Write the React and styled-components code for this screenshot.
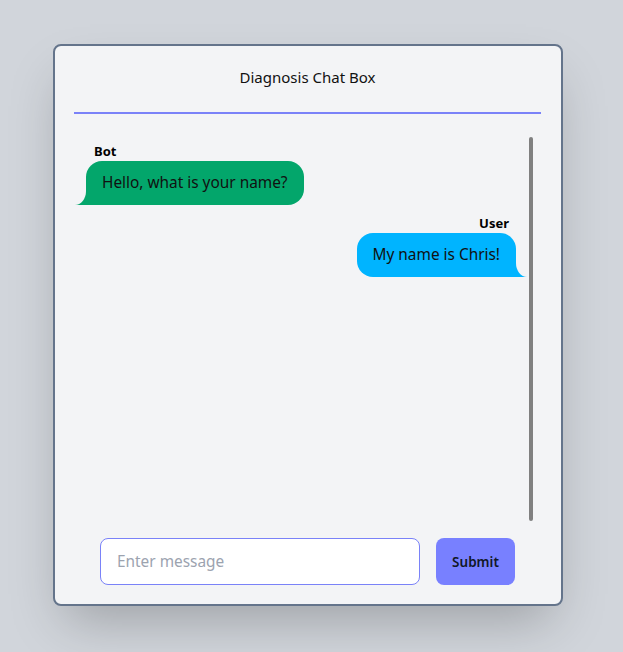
import React, { useState } from "react";
import styled, { createGlobalStyle } from "styled-components";

const GlobalStyle = createGlobalStyle`
  html, body {
    margin: 0;
    padding: 0;
    background: #d1d5db;
    font-family: "Noto Sans", "Open Sans", sans-serif;
  }
`;

const Page = styled.div`
  padding: 44px 0 0 53px;
  height: 652px;
  box-sizing: border-box;
`;

const Card = styled.div`
  width: 510px;
  height: 562px;
  box-sizing: border-box;
  border: 2px solid #64748b;
  border-radius: 8px;
  background: #f3f4f6;
  box-shadow: 0 25px 50px -12px rgba(0, 0, 0, 0.25);
  padding: 0 20px 0 19px;
  display: flex;
  flex-direction: column;
`;

const Header = styled.div`
  padding: 20px 0 24px;
  line-height: 22px;
  text-align: center;
  font-size: 15px;
  color: #111;
  border-bottom: 2px solid #7a82f8;
`;

const ChatBody = styled.div`
  flex: 1;
  display: flex;
  min-height: 0;
`;

const Messages = styled.div`
  flex: 1;
  padding: 29px 2px 0 1px;
  display: flex;
  flex-direction: column;
  gap: 10px;
`;

const Scrollbar = styled.div`
  width: 4px;
  margin: 23px 8px 5px 0;
  border-radius: 2px;
  background: #808080;
`;

const Row = styled.div`
  display: flex;
  flex-direction: column;
  align-items: ${(p) => (p.$mine ? "flex-end" : "flex-start")};
`;

const Sender = styled.div`
  font-size: 13px;
  font-weight: 700;
  line-height: 16px;
  color: #000;
  margin: ${(p) => (p.$mine ? "0 18px 2px 0" : "0 0 2px 19px")};
`;

const Bubble = styled.div`
  position: relative;
  background: ${(p) => p.$bg};
  color: #111;
  font-size: 15.4px;
  line-height: 24px;
  padding: 10px 16px;
  border-radius: 16px;
  ${(p) =>
    p.$mine
      ? "margin-right: 11px; border-bottom-right-radius: 0;"
      : "margin-left: 11px; border-bottom-left-radius: 0;"}

  &::before,
  &::after {
    content: "";
    position: absolute;
    bottom: 0;
    width: 11px;
    height: 16px;
    ${(p) => (p.$mine ? "right: -11px;" : "left: -11px;")}
  }
  &::before {
    background: ${(p) => p.$bg};
  }
  &::after {
    background: #f3f4f6;
    ${(p) =>
      p.$mine
        ? "border-bottom-left-radius: 11px 14px;"
        : "border-bottom-right-radius: 11px 14px;"}
  }
`;

const Footer = styled.form`
  display: flex;
  gap: 16px;
  padding: 12px 0 19px 26px;
`;

const Input = styled.input`
  width: 320px;
  height: 47px;
  box-sizing: border-box;
  border: 1px solid #7a82f8;
  border-radius: 8px;
  background: #fff;
  padding: 0 16px;
  font-family: inherit;
  font-size: 15.4px;
  color: #111;
  outline: none;
  &::placeholder {
    color: #9ca3af;
  }
`;

const SubmitButton = styled.button`
  width: 79px;
  height: 47px;
  border: none;
  border-radius: 8px;
  background: #7880ff;
  color: #111827;
  font-family: inherit;
  font-size: 13.5px;
  font-weight: 600;
  cursor: pointer;
`;

const messages = [
  { from: "Bot", text: "Hello, what is your name?" },
  { from: "User", text: "My name is Chris!" },
];

export default function App() {
  const [value, setValue] = useState("");

  return (
    <Page>
      <GlobalStyle />
      <Card>
        <Header>Diagnosis Chat Box</Header>
        <ChatBody>
          <Messages>
            {messages.map((m, i) => {
              const mine = m.from === "User";
              return (
                <Row key={i} $mine={mine}>
                  <Sender $mine={mine}>{m.from}</Sender>
                  <Bubble $mine={mine} $bg={mine ? "#00b4ff" : "#03a66b"}>
                    {m.text}
                  </Bubble>
                </Row>
              );
            })}
          </Messages>
          <Scrollbar />
        </ChatBody>
        <Footer onSubmit={(e) => e.preventDefault()}>
          <Input
            placeholder="Enter message"
            value={value}
            onChange={(e) => setValue(e.target.value)}
          />
          <SubmitButton type="submit">Submit</SubmitButton>
        </Footer>
      </Card>
    </Page>
  );
}
